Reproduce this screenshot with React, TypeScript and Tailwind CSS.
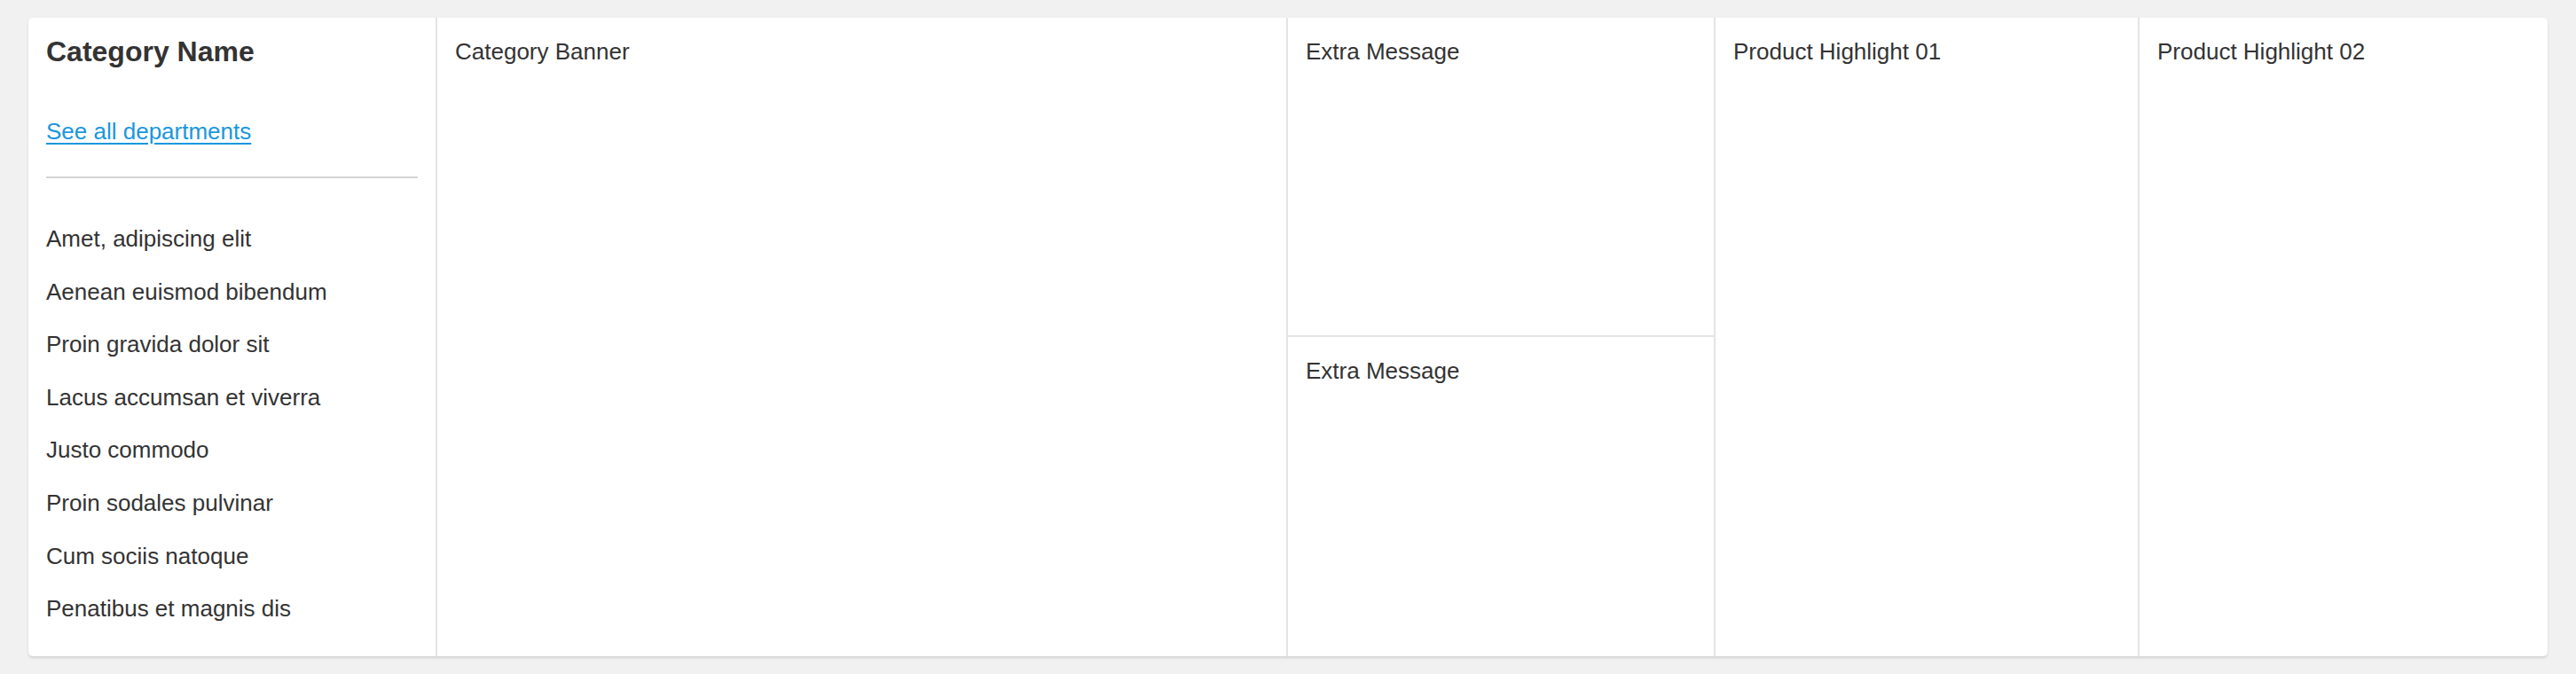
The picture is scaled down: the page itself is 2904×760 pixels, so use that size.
import React from "react";

const items = [
  "Amet, adipiscing elit",
  "Aenean euismod bibendum",
  "Proin gravida dolor sit",
  "Lacus accumsan et viverra",
  "Justo commodo",
  "Proin sodales pulvinar",
  "Cum sociis natoque",
  "Penatibus et magnis dis",
];

export default function App() {
  return (
    <div
      className="h-[760px] bg-[#f1f1f1] px-[32px] pt-[20px] text-[#333333]"
      style={{ fontFamily: '"Liberation Sans", Arial, Helvetica, sans-serif' }}
    >
      <div className="grid h-[720px] grid-cols-[459px_959px_482px_478px_462px] rounded-[5px] bg-white shadow-[0_2px_3px_rgba(0,0,0,0.13)]">
        <div className="flex flex-col px-[20px] pt-[22px]">
          <h1 className="text-[32px] font-bold leading-[33px]">Category Name</h1>
          <a
            href="#"
            className="mt-[56px] self-start text-[26px] leading-[34px] text-[#1a96de] underline decoration-[2px] underline-offset-[4px]"
          >
            See all departments
          </a>
          <div className="mt-[34px] h-[2px] bg-[#d4d4d4]" />
          <ul className="mt-[39px] flex flex-col">
            {items.map((t) => (
              <li key={t} className="text-[26px] leading-[59.6px]">
                {t}
              </li>
            ))}
          </ul>
        </div>
        <div className="border-l-2 border-[#e4e4e4] px-[20px] pt-[21px] text-[26px] leading-[34px]">
          Category Banner
        </div>
        <div className="flex flex-col border-l-2 border-[#e4e4e4]">
          <div className="h-[358px] px-[20px] pt-[21px] text-[26px] leading-[34px]">Extra Message</div>
          <div className="flex-1 border-t-2 border-[#e4e4e4] px-[20px] pt-[21px] text-[26px] leading-[34px]">
            Extra Message
          </div>
        </div>
        <div className="border-l-2 border-[#e4e4e4] px-[20px] pt-[21px] text-[26px] leading-[34px]">
          Product Highlight 01
        </div>
        <div className="border-l-2 border-[#e4e4e4] px-[20px] pt-[21px] text-[26px] leading-[34px]">
          Product Highlight 02
        </div>
      </div>
    </div>
  );
}
